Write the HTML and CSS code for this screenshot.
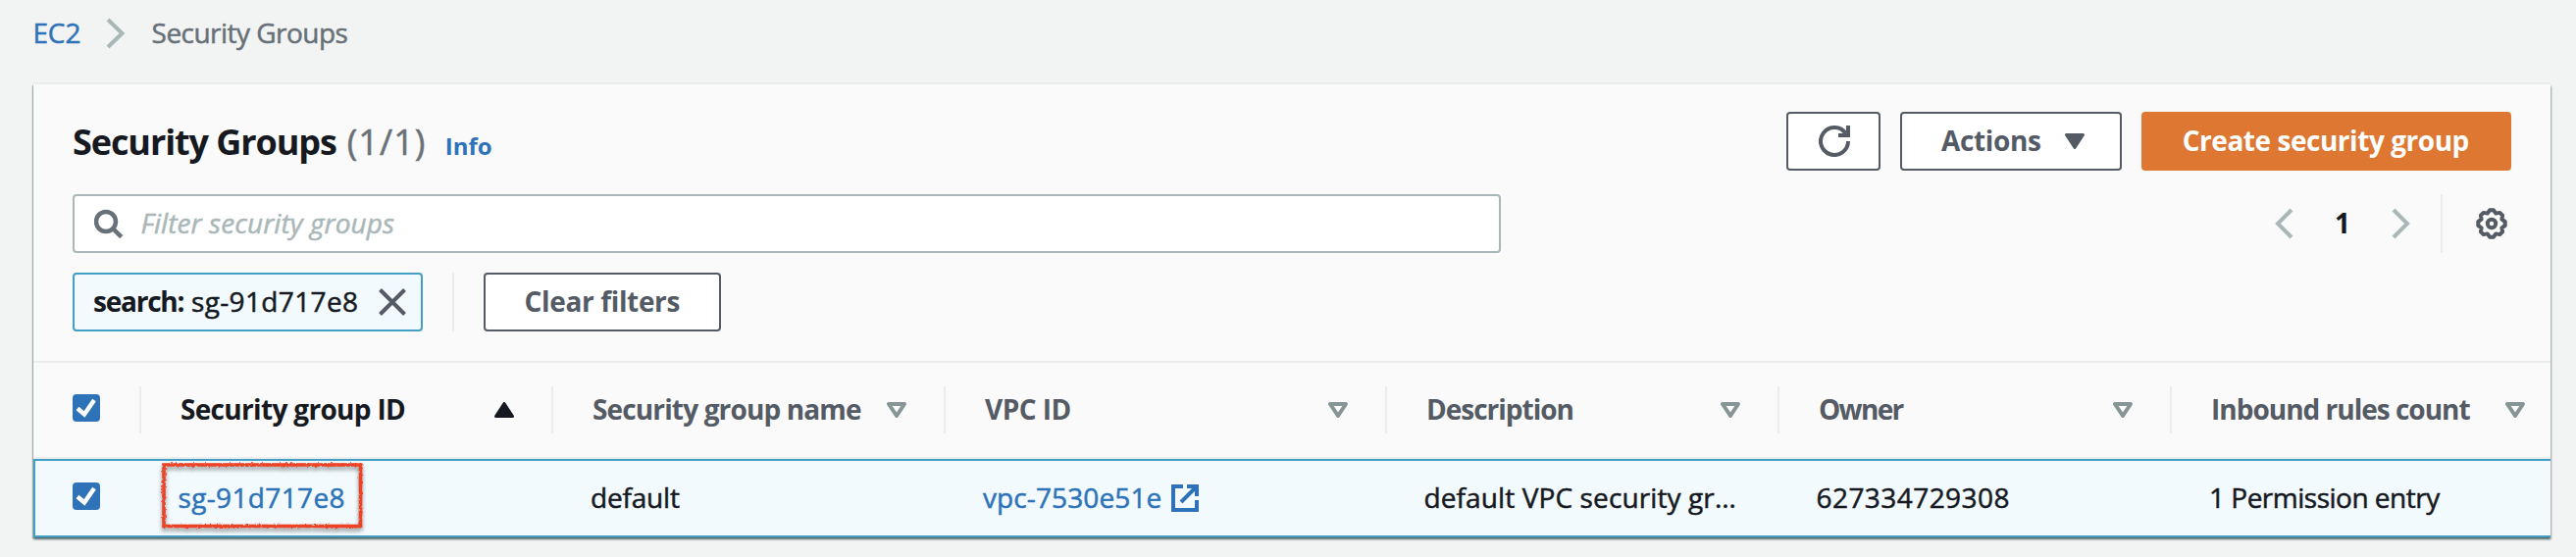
FILE: index.html
```html
<!DOCTYPE html>
<html lang="en">
<head>
<meta charset="utf-8">
<title>Security Groups</title>
<link rel="stylesheet" href="styles.css">
</head>
<body>
<nav class="crumbs">
  <a class="crumb-link">EC2</a>
  <svg class="crumb-sep" width="20" height="32" viewBox="0 0 20 32"><path d="M2 2 L16.500 16 L2 30"/></svg>
  <span class="crumb-current">Security Groups</span>
</nav>
<main class="panel">
  <header class="head">
    <div class="heading"><h1 class="title">Security Groups</h1><span class="count">(1/1)</span><a class="info">Info</a></div>
    <div class="buttons">
      <button class="btn refresh"><svg width="32" height="32" viewBox="0 0 32 32"><path d="M30 16 A14 14 0 1 1 27.500 8"/><path d="M30 0 V10 H20"/></svg></button>
      <button class="btn actions"><span>Actions</span><svg class="caret" width="20" height="16" viewBox="0 0 20 16"><path d="M1.500 1.500 H18.500 L10 14.500 Z"/></svg></button>
      <button class="btn primary"><span>Create security group</span></button>
    </div>
  </header>
  <div class="tools">
    <div class="search">
      <svg width="32" height="32" viewBox="0 0 32 32"><circle cx="12" cy="14" r="10"/><path d="M19 21 L27.700 29.700"/></svg>
      <span class="placeholder">Filter security groups</span>
    </div>
    <div class="pager">
      <svg class="chev" width="20" height="32" viewBox="0 0 20 32"><path d="M18 2 L4 16 L18 30"/></svg>
      <b class="page">1</b>
      <svg class="chev" width="20" height="32" viewBox="0 0 20 32"><path d="M2 2 L16 16 L2 30"/></svg>
      <i class="rule"></i>
      <svg class="gear" width="32" height="32" viewBox="0 0 32 32"><path d="M14 2.300 H18 L20.300 5.600 L24.300 4.900 L27.100 7.700 L26.400 11.700 L29.700 14 V18 L26.400 20.300 L27.100 24.300 L24.300 27.100 L20.300 26.400 L18 29.700 H14 L11.700 26.400 L7.700 27.100 L4.900 24.300 L5.600 20.300 L2.300 18 V14 L5.600 11.700 L4.900 7.700 L7.700 4.900 L11.700 5.600 Z"/><circle cx="16" cy="16" r="4.200"/></svg>
    </div>
  </div>
  <div class="filters">
    <div class="chip"><b class="chip-key">search:</b><span class="chip-value">sg-91d717e8</span><svg width="28" height="28" viewBox="0 0 28 28"><path d="M1.500 1.500 L26.500 26.500 M26.500 1.500 L1.500 26.500"/></svg></div>
    <i class="rule"></i>
    <button class="btn clear"><span>Clear filters</span></button>
  </div>
  <div class="row thead">
    <div class="cell"><span class="check"><svg width="28" height="28" viewBox="0 0 28 28"><path d="M5 14.500 L12 20.500 L22 6"/></svg></span></div>
    <div class="cell sorted"><span class="t-id">Security group ID</span><svg class="sort" width="20" height="16" viewBox="0 0 20 16"><path d="M1.500 14.500 L10 1.500 L18.500 14.500 Z"/></svg></div>
    <div class="cell"><span class="t-name">Security group name</span><svg class="sort" width="20" height="16" viewBox="0 0 20 16"><path d="M2 2 H18 L10 14 Z"/></svg></div>
    <div class="cell"><span class="t-vpc">VPC ID</span><svg class="sort" width="20" height="16" viewBox="0 0 20 16"><path d="M2 2 H18 L10 14 Z"/></svg></div>
    <div class="cell"><span class="t-desc">Description</span><svg class="sort" width="20" height="16" viewBox="0 0 20 16"><path d="M2 2 H18 L10 14 Z"/></svg></div>
    <div class="cell"><span class="t-owner">Owner</span><svg class="sort" width="20" height="16" viewBox="0 0 20 16"><path d="M2 2 H18 L10 14 Z"/></svg></div>
    <div class="cell"><span class="t-inbound">Inbound rules count</span><svg class="sort last" width="20" height="16" viewBox="0 0 20 16"><path d="M2 2 H18 L10 14 Z"/></svg></div>
  </div>
  <div class="row data">
    <div class="cell"><span class="check"><svg width="28" height="28" viewBox="0 0 28 28"><path d="M5 14.500 L12 20.500 L22 6"/></svg></span></div>
    <div class="cell"><a class="v-id">sg-91d717e8</a>
      <svg class="mark" width="214" height="76" viewBox="0 0 214 76">
        <filter id="crayon" x="-5%" y="-10%" width="110%" height="120%"><feTurbulence type="fractalNoise" baseFrequency=".4" numOctaves="2" seed="4"/><feDisplacementMap in="SourceGraphic" scale="3"/></filter>
        <rect x="6" y="6" width="200.500" height="62.500" filter="url(#crayon)"/>
      </svg>
    </div>
    <div class="cell"><span class="v-name">default</span></div>
    <div class="cell"><a class="v-vpc">vpc-7530e51e</a><svg class="ext" width="28" height="28" viewBox="0 0 28 28"><path d="M12 2 H2 V26 H26 V16 M16 2 H26 V12 M25 3 L10 18"/></svg></div>
    <div class="cell"><span class="v-desc">default VPC security gr…</span></div>
    <div class="cell"><span class="v-owner">627334729308</span></div>
    <div class="cell"><span class="v-inbound">1 Permission entry</span></div>
  </div>
</main>
</body>
</html>
```
FILE: styles.css
```css
* { box-sizing: border-box; }
body { margin: 0; height: 568px; overflow: hidden; background: #f2f4f3; color: #16191f; font: 28px/44px "Open Sans", "Noto Sans", sans-serif; }
svg { display: block; flex: none; fill: none; stroke: #545b64; stroke-width: 4; }
span, a, b { white-space: nowrap; }
b { font-weight: 700; }
a { color: #2e73b8; }

.crumbs { display: flex; align-items: center; height: 68px; padding-left: 33.4px; margin-bottom: 18px; color: #687078; }
.crumb-link, .crumb-current { padding-bottom: 2px; }
.crumb-link { width: 49px; letter-spacing: -.1px; }
.crumb-sep { margin: 0 26.200px 0 26px; stroke: #aab7b8; }
.crumb-current { letter-spacing: -.53px; }
.crumb-link, .crumb-current, .count, .placeholder, .chip-value, .data span, .data a { -webkit-text-stroke: .5px currentColor; }

.panel { width: 2566px; height: 462px; margin-left: 34px; padding-top: 28px; background: #fafafa; box-shadow: 0 -2px 0 #eaedec, 0 2px 2px rgba(0, 28, 36, .5), 1px 2px 2px rgba(0, 28, 36, .2), -1px 1px 1px rgba(0, 28, 36, .2); }
.head { display: flex; justify-content: space-between; height: 60px; padding: 0 40px; }
.heading { display: flex; align-items: baseline; padding-top: 1px; line-height: 60px; }
.title { margin: 0; font-size: 36px; font-weight: 700; letter-spacing: -1.09px; }
.count { width: 80.600px; margin-left: 11px; font-size: 36px; letter-spacing: 1px; color: #687078; }
.info { margin-left: 19.5px; font-size: 24px; font-weight: 700; }

.buttons { display: flex; gap: 20px; }
.btn { display: flex; align-items: center; height: 60px; padding: 0; border: 2px solid #545b64; border-radius: 4px; background: #fff; color: #545b64; font: 700 28px/44px "Open Sans", "Noto Sans", sans-serif; }
.btn span { padding-bottom: 2px; }
.refresh { width: 96px; padding-left: 2px; justify-content: center; }
.actions { width: 226px; padding-left: 40px; letter-spacing: -.36px; }
.caret { margin-left: 24.500px; fill: #545b64; stroke-width: 3; stroke-linejoin: round; }
.primary { width: 377px; padding-left: 39.700px; border-color: #dd7731; background: #dd7731; color: #fff; letter-spacing: -.46px; }

.tools { display: flex; justify-content: space-between; margin-top: 24px; padding: 0 40px; }
.search { display: flex; align-items: center; width: 1456px; height: 60px; padding-left: 20px; border: 2px solid #aab7b8; border-radius: 4px; background: #fff; }
.search svg { stroke: #687078; stroke-width: 4.5; }
.placeholder { margin-left: 15.500px; padding-bottom: 2px; font-style: italic; letter-spacing: .07px; color: #aab7b8; }
.pager { display: flex; align-items: center; width: 242px; }
.chev { stroke: #aab7b8; }
.page { width: 100px; padding-bottom: 2px; text-align: center; }
.rule { width: 2px; height: 60px; background: #eaedec; }
.pager .rule { margin-left: 30px; }
.gear { margin-left: 34px; stroke-linejoin: round; }

.filters { display: flex; margin-top: 20px; padding-left: 40px; }
.chip { display: flex; align-items: center; width: 357px; height: 60px; padding-left: 19px; border: 2px solid #449fc6; border-radius: 4px; background: #f2fafd; }
.chip-key { width: 100px; padding-bottom: 2px; letter-spacing: -1.23px; }
.chip-value { width: 190.500px; padding-bottom: 2px; letter-spacing: .35px; }
.filters .rule { margin: 0 30px; }
.clear { width: 242px; padding-left: 39.500px; letter-spacing: -.35px; }

.row { display: grid; grid-template-columns: 108px 420px 400px 450px 400px 400px 388px; }
.cell { position: relative; display: flex; align-items: center; }
.cell > span, .cell > a { padding-bottom: 2px; }
.cell:first-child { padding-left: 40px; }
.cell > .check { width: 28px; height: 28px; padding: 0; border-radius: 4px; background: #2e73b8; }
.thead .check { margin-bottom: 4px; }
.data .check { margin-bottom: 4px; }
.check svg { stroke: #fff; stroke-width: 4.5; }
.thead { height: 100px; margin-top: 30px; border: solid #eaedec; border-width: 2px 0; color: #545b64; font-weight: 700; }
.thead .cell + .cell::before { content: ""; width: 2px; height: 48px; background: #eaedec; }
.thead .sorted { color: #16191f; }
.sort { margin-left: auto; margin-right: 38px; stroke: #879596; stroke-linejoin: round; }
.sorted .sort { fill: #16191f; stroke: #16191f; stroke-width: 3; }
.sort.last { margin-right: 26px; }
.t-id { margin-left: 40px; letter-spacing: -.68px; }
.t-name { margin-left: 40px; letter-spacing: -.86px; }
.t-vpc { margin-left: 40px; letter-spacing: -.53px; }
.t-desc { margin-left: 40px; letter-spacing: -1.01px; }
.t-owner { margin-left: 40px; letter-spacing: -1.67px; }
.t-inbound { margin-left: 40px; letter-spacing: -1px; }

.data { height: 80px; background: #f2fafd; border: solid #449fc6; border-width: 2px 0 2px 2px; grid-template-columns: 106px 420px 400px 450px 400px 400px 388px; }
.data .cell:first-child { padding-left: 38px; }
.v-id { margin-left: 39.500px; letter-spacing: .35px; }
.v-name { margin-left: 40px; letter-spacing: -.18px; }
.v-vpc { width: 182px; margin-left: 40px; letter-spacing: .11px; }
.ext { margin-left: 10px; stroke: #2e73b8; }
.v-desc { margin-left: 39.500px; letter-spacing: .11px; }
.v-owner { margin-left: 39.500px; letter-spacing: .44px; }
.v-inbound { margin-left: 40px; letter-spacing: -.5px; }
.mark { position: absolute; left: 19px; top: -2px; stroke: #ee4326; stroke-width: 3.600; filter: drop-shadow(0 3px 2px rgba(0, 0, 0, .4)); }
```
